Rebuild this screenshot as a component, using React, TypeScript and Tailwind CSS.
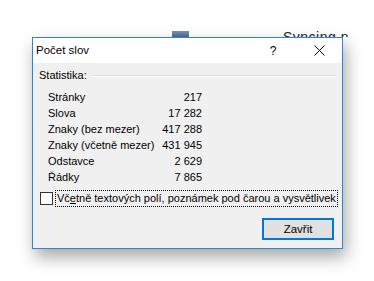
import React from 'react';

const stats: [string, string][] = [
  ['Stránky', '217'],
  ['Slova', '17 282'],
  ['Znaky (bez mezer)', '417 288'],
  ['Znaky (včetně mezer)', '431 945'],
  ['Odstavce', '2 629'],
  ['Řádky', '7 865'],
];

const App: React.FC = () => {
  return (
    <div
      className="w-[374px] h-[281px] bg-white overflow-hidden flex flex-col text-black whitespace-nowrap"
      style={{ fontFamily: '"Liberation Sans", Arial, sans-serif' }}
    >
      <div className="h-[29px] shrink-0" />
      {/* piece of the window behind */}
      <div className="h-[8px] shrink-0 flex items-end overflow-hidden">
        <div className="ml-[172px] w-[17px] h-[6px] bg-gradient-to-b from-[#7d93b5] to-[#4a6a98]" />
        <div className="ml-[94px] h-[8px] overflow-hidden">
          <div className="text-[14px] leading-[16px] tracking-[0.5px] text-[#222]">Syncing.n</div>
        </div>
      </div>

      <div className="ml-[32px] w-[311px] h-[212px] shrink-0 border border-[#2f84d4] bg-[#f0f0f0] flex flex-col shadow-[3px_8px_16px_rgba(0,0,0,0.35)]">
        <div className="h-[25px] bg-white flex items-center text-[11.5px]">
          <span className="ml-[3px]">Počet slov</span>
          <span className="ml-auto w-[46px] text-center text-[12px]">?</span>
          <div className="w-[46px] flex items-center justify-center">
            <svg width="11" height="11" viewBox="0 0 11 11">
              <path d="M0.5 0.5 L10.5 10.5 M10.5 0.5 L0.5 10.5" stroke="#000" strokeWidth="1" />
            </svg>
          </div>
        </div>

        <div className="flex flex-col text-[11px] pt-[4px] px-[6px]">
          <div className="h-[16px] flex items-center">
            <span className="leading-[16px]">Statistika:</span>
            <div className="flex-1 ml-[6px] mt-[2px] border-t border-[#dcdcdc] border-b border-b-white" />
          </div>

          <div className="mt-[6px] flex flex-col">
            {stats.map(([label, value]) => (
              <div key={label} className="ml-[9px] w-[154px] h-[16px] flex items-center justify-between leading-[16px]">
                <span>{label}</span>
                <span>{value}</span>
              </div>
            ))}
          </div>

          <div className="mt-[5px] h-[17px] flex items-center">
            <div className="shrink-0 ml-[1px] w-[13px] h-[13px] border border-[#333] bg-white" />
            <span className="ml-[2px] px-[1px] leading-[15px] border border-dotted border-black">
              Vč<u>e</u>tně textových polí, poznámek pod čarou a vysvětlivek
            </span>
          </div>

          <div className="mt-[11px] flex justify-end">
            <button className="mr-[2px] w-[72px] h-[22px] border-2 border-[#0078d7] bg-[#e1e1e1] text-[11.5px] leading-[16px] flex items-center justify-center">
              Zavřit
            </button>
          </div>
        </div>
      </div>
    </div>
  );
};

export default App;
